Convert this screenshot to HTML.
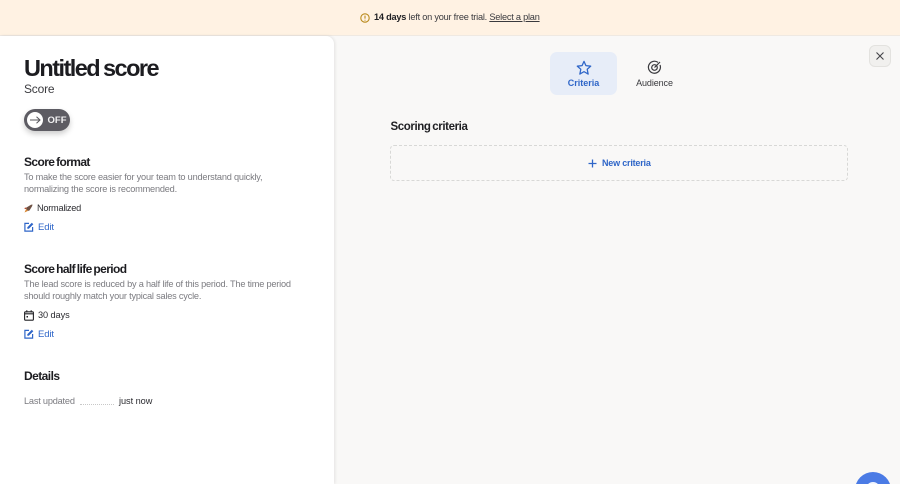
<!DOCTYPE html>
<html><head><meta charset="utf-8">
<style>
*{box-sizing:border-box}
html,body{margin:0;padding:0;width:900px;height:484px;overflow:hidden;background:#f9f8f7;font-family:"Liberation Sans",sans-serif}
#w{position:relative;width:900px;height:484px;overflow:hidden;background:#f9f8f7}
.a{position:absolute;white-space:nowrap}
.h{font-weight:700;color:#1c1c20;font-size:12px;letter-spacing:-.6px;word-spacing:-1px}
.g{color:#7b7b80;font-size:9.200px;letter-spacing:-.2px}
.k{color:#2b2b30;font-size:9.200px}
.b{color:#2f66c8;font-size:9.500px;letter-spacing:-.1px}
</style></head><body><div id="w">
<div class="a" style="left:0;top:0;width:900px;height:36px;background:#fff2e3;border-bottom:1px solid #efe9e2"></div>
<svg class="a" style="left:360px;top:12.500px" width="10" height="10" viewBox="0 0 10 10"><circle cx="5" cy="5" r="4.2" fill="none" stroke="#b98a1c" stroke-width="1.1"/><path d="M5 2.600V5.600M5 6.800V7.600" stroke="#b98a1c" stroke-width="1.1"/></svg>
<div class="a" style="left:374px;top:10px;font-size:9.200px;line-height:14px;letter-spacing:-.22px;color:#3a3a3e"><b style="color:#1f1f23">14 days</b> left on your free trial. <span style="text-decoration:underline">Select a plan</span></div>

<div class="a" style="left:0;top:36px;width:333.500px;height:448px;background:#fff;border-top-right-radius:8px;box-shadow:1px 0 3px rgba(0,0,0,.09)"></div>
<div class="a" style="left:24px;top:54px;font-size:23.500px;line-height:28px;font-weight:700;color:#1c1c20;letter-spacing:-1.55px;word-spacing:-1px">Untitled score</div>
<div class="a" style="left:24px;top:81px;font-size:12px;line-height:16px;letter-spacing:-.2px;color:#3c3c40">Score</div>

<div class="a" style="left:24px;top:109px;width:46px;height:22px;border-radius:11px;background:#5d5c63;box-shadow:0 3px 6px rgba(0,0,0,.2)"></div>
<div class="a" style="left:27px;top:112px;width:16px;height:16px;border-radius:50%;background:#fff"></div>
<svg class="a" style="left:29px;top:114px" width="12" height="12" viewBox="0 0 12 12"><path d="M1 6H11M7.500 2.800L11 6L7.500 9.200" fill="none" stroke="#55545a" stroke-width="1"/></svg>
<div class="a" style="left:47.500px;top:115px;height:12px;font-size:9.500px;line-height:12px;font-weight:700;color:#f2f2f3">OFF</div>

<div class="a h" style="left:24px;top:154px;line-height:16px">Score format</div>
<div class="a g" style="left:24px;top:171px;line-height:12px">To make the score easier for your team to understand quickly,<br>normalizing the score is recommended.</div>
<svg class="a" style="left:24px;top:204px" width="9" height="9" viewBox="0 0 9 9"><path d="M2.500 3.500L7 .8 8.500 .5 8.200 2 5.500 6.500 4 6.900 2.100 5 2.500 3.500Z" fill="#6e5144"/><path d="M2.100 5L.5 8.500 4 6.900Z" fill="#d9862f"/><path d="M2.500 3.500L.8 3.800.5 5 2.100 5Z" fill="#b84a2c"/></svg>
<div class="a k" style="left:37px;top:202px;line-height:13px;letter-spacing:-.25px">Normalized</div>
<svg class="a" style="left:24px;top:222px" width="10" height="10" viewBox="0 0 10 10"><path d="M5 1.400H.9V9.100H8.600V5" fill="none" stroke="#2f66c8" stroke-width="1.200"/><path d="M3.300 6.700V5.200L7.800.7 9.300 2.200 4.800 6.700Z" fill="#2f66c8"/></svg>
<div class="a b" style="left:38px;top:221px;line-height:13px">Edit</div>

<div class="a h" style="left:24px;top:261px;line-height:16px">Score half life period</div>
<div class="a g" style="left:24px;top:278px;line-height:12px">The lead score is reduced by a half life of this period. The time period<br>should roughly match your typical sales cycle.</div>
<svg class="a" style="left:24px;top:310px" width="10" height="11" viewBox="0 0 10 11"><rect x=".6" y="1.800" width="8.800" height="8.400" rx="1" fill="none" stroke="#222226" stroke-width="1.100"/><path d="M.6 3.800H9.400M2.800 .3V2.500M7.200 .3V2.500" stroke="#222226" stroke-width="1.100" fill="none"/><path d="M2.500 6H4V7.500H2.500Z" fill="#222226"/></svg>
<div class="a k" style="left:38px;top:309px;line-height:13px;letter-spacing:-.08px">30 days</div>
<svg class="a" style="left:24px;top:329px" width="10" height="10" viewBox="0 0 10 10"><path d="M5 1.400H.9V9.100H8.600V5" fill="none" stroke="#2f66c8" stroke-width="1.200"/><path d="M3.300 6.700V5.200L7.800.7 9.300 2.200 4.800 6.700Z" fill="#2f66c8"/></svg>
<div class="a b" style="left:38px;top:328px;line-height:13px">Edit</div>

<div class="a h" style="left:24px;top:368px;line-height:16px;letter-spacing:-.55px">Details</div>
<div class="a g" style="left:24px;top:395px;line-height:13px">Last updated</div>
<div class="a" style="left:80px;top:404px;width:34px;border-top:1px dotted #c8c8c8"></div>
<div class="a k" style="left:119px;top:395px;line-height:13px;letter-spacing:-.05px">just now</div>

<div class="a" style="left:550px;top:52px;width:67px;height:43px;border-radius:7px;background:#e7edf8"></div>
<svg class="a" style="left:576px;top:59.500px" width="16" height="16" viewBox="0 0 15 15"><path d="M7.500 1.300L9.300 5.300 13.800 5.800 10.500 8.700 11.400 13.200 7.500 10.900 3.600 13.200 4.500 8.700 1.200 5.800 5.700 5.300Z" fill="none" stroke="#2f66c8" stroke-width="1.200" stroke-linejoin="round"/></svg>
<div class="a" style="left:550px;top:77px;width:67px;text-align:center;font-size:9px;line-height:12px;font-weight:700;color:#2f66c8">Criteria</div>
<svg class="a" style="left:647px;top:59.500px" width="15" height="15" viewBox="0 0 15 15"><path d="M11 2.400A6 6 0 1 0 13 5" fill="none" stroke="#3a3a3e" stroke-width="1.200"/><circle cx="7.500" cy="7.500" r="2.800" fill="none" stroke="#3a3a3e" stroke-width="1.200"/><path d="M7.500 7.500L13 2" stroke="#3a3a3e" stroke-width="1.200"/></svg>
<div class="a" style="left:621px;top:77px;width:67px;text-align:center;font-size:9px;letter-spacing:-.1px;line-height:12px;color:#38383c">Audience</div>

<div class="a" style="left:390.500px;top:119px;font-size:11.500px;line-height:16px;font-weight:700;color:#1f1f23;letter-spacing:-.4px;word-spacing:-1px">Scoring criteria</div>
<div class="a" style="left:390px;top:145px;width:458px;height:36px;border:1px dashed #d8d8d6;border-radius:4px"></div>
<svg class="a" style="left:588px;top:158.500px" width="9" height="9" viewBox="0 0 9 9"><path d="M4.500 .5V8.500M.5 4.500H8.500" stroke="#2f66c8" stroke-width="1.300"/></svg>
<div class="a" style="left:602px;top:157px;font-size:9px;letter-spacing:-.2px;line-height:12px;font-weight:700;color:#2f66c8">New criteria</div>

<div class="a" style="left:869px;top:45px;width:22px;height:22px;border-radius:6px;background:#f1f0ee;border:1px solid #e3e2df"></div>
<svg class="a" style="left:876px;top:52px" width="8" height="8" viewBox="0 0 8 8"><path d="M.5 .5L7.500 7.500M7.500 .5L.5 7.500" stroke="#444448" stroke-width="1.100"/></svg>

<div class="a" style="left:855px;top:472px;width:36px;height:36px;border-radius:50%;background:#4b7be5"></div>
<div class="a" style="left:866px;top:482px;width:14px;height:14px;border-radius:50%;border:2px solid #f1f5fe"></div>
</div></body></html>
